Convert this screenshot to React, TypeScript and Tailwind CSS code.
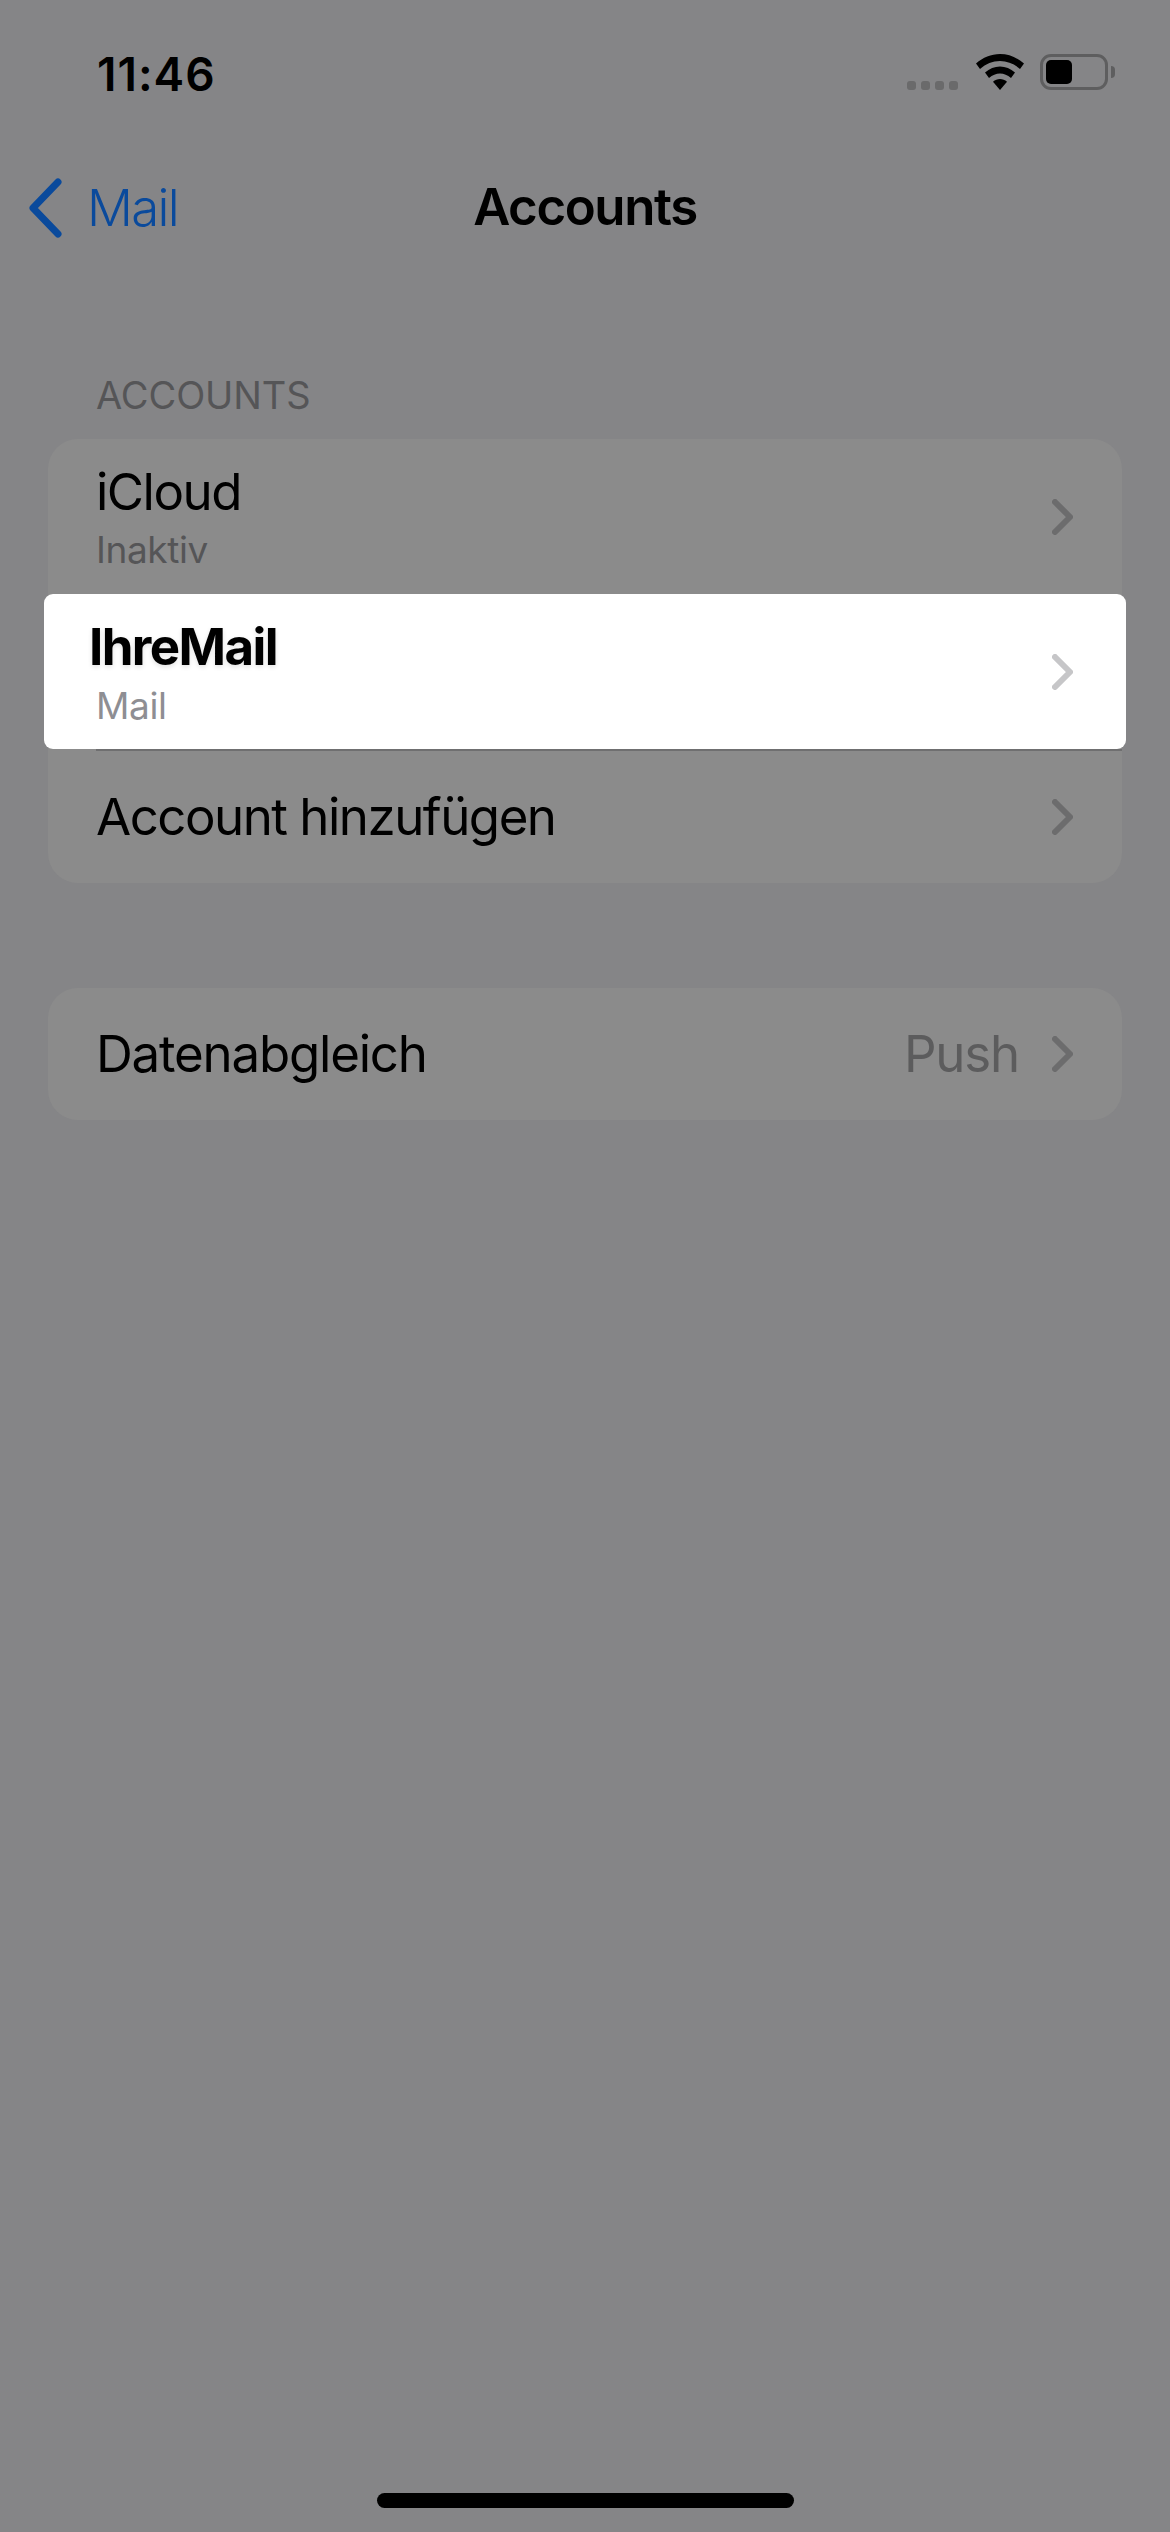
import React from "react";

function Chevron({ color }: { color: string }) {
  return (
    <svg width="21" height="36" viewBox="0 0 21 36" fill="none" className="shrink-0">
      <path d="M3 3 L18 18 L3 33" stroke={color} strokeWidth="6" strokeLinecap="round" strokeLinejoin="round" />
    </svg>
  );
}

function StatusBar() {
  return (
    <div className="flex h-[150px] items-start justify-between pl-[97px] pr-[55px] pt-[47px]">
      <span className="text-[46px] leading-[54px] font-semibold tracking-[1px] text-black">11:46</span>
      <div className="flex items-start pt-[7px]">
        <div className="mt-[27px] flex gap-[5px]">
          <span className="h-[9px] w-[9px] rounded-[3px] bg-[#6a6a6b]" />
          <span className="h-[9px] w-[9px] rounded-[3px] bg-[#6a6a6b]" />
          <span className="h-[9px] w-[9px] rounded-[3px] bg-[#6a6a6b]" />
          <span className="h-[9px] w-[9px] rounded-[3px] bg-[#6a6a6b]" />
        </div>
        <svg width="48" height="36" viewBox="0 0 48 36" className="ml-[18px] mr-[-1px]" fill="#000">
          <path d="M24 0C15 0 7 3.500 0 9.500L4 15C10 9.800 16.500 7 24 7C31.500 7 38 9.800 44 15L48 9.500C41 3.500 33 0 24 0Z" />
          <path d="M24 12.500C18.500 12.500 13.500 14.500 9 18.500L13 24C16.500 21 20 19.500 24 19.500C28 19.500 31.500 21 35 24L39 18.500C34.500 14.500 29.500 12.500 24 12.500Z" />
          <path d="M24 25C21.500 25 19 26 17 27.800L24 36L31 27.800C29 26 26.500 25 24 25Z" />
        </svg>
        <div className="ml-[17px] flex h-[36px] w-[68px] items-center rounded-[11px] border-[3px] border-[#5e5e5f] p-[3px]">
          <span className="h-[24px] w-[26px] rounded-[5px] bg-black" />
        </div>
        <span className="ml-[3px] mt-[12px] h-[12px] w-[4px] rounded-r-[4px] bg-[#5e5e5f]" />
      </div>
    </div>
  );
}

function NavBar() {
  return (
    <div className="relative flex h-[114px] items-center justify-center">
      <div className="absolute left-[26px] top-[28px] flex items-center">
        <svg width="38" height="60" viewBox="0 0 38 60" fill="none">
          <path d="M32 4 L7 30 L32 56" stroke="#0a4a9c" strokeWidth="7" strokeLinecap="round" strokeLinejoin="round" />
        </svg>
        <span className="ml-[23px] text-[51px] leading-[60px] font-light tracking-[-1.7px] text-[#0a4a9c]">Mail</span>
      </div>
      <span className="text-[51px] leading-[60px] font-semibold tracking-[-1.4px] text-black">Accounts</span>
    </div>
  );
}

function Row({
  title,
  subtitle,
  value,
  height,
  titleTracking = "tracking-[-1.5px]",
}: {
  title: string;
  subtitle?: string;
  value?: string;
  height: string;
  titleTracking?: string;
}) {
  return (
    <div className={`flex items-center justify-between pl-[48px] pr-[49px] ${height}`}>
      <div className="flex flex-col">
        <span className={`text-[51px] leading-[60px] text-black ${titleTracking}`}>{title}</span>
        {subtitle && <span className="mt-[6px] text-[37px] leading-[44px] tracking-[-0.4px] text-[#555557]">{subtitle}</span>}
      </div>
      <div className="flex items-center gap-[33px]">
        {value && <span className="text-[51px] leading-[60px] tracking-[-1.2px] text-[#5c5c5d]">{value}</span>}
        <Chevron color="#6c6c6d" />
      </div>
    </div>
  );
}

export default function App() {
  return (
    <div className="flex h-[2532px] w-[1170px] flex-col overflow-hidden bg-[#858587] font-['Inter','Liberation_Sans',sans-serif]">
      <StatusBar />
      <NavBar />
      <div className="px-[48px] pt-[108px]">
        <div className="pl-[48px] text-[38px] leading-[46px] tracking-[-0.1px] text-[#555557]">ACCOUNTS</div>
        <div className="mt-[21px] rounded-[30px] bg-[#8b8b8b]">
          <Row title="iCloud" subtitle="Inaktiv" height="h-[155px]" />
          <div className="relative z-10 -mx-[4px] flex h-[155px] items-center justify-between rounded-[9px] bg-white pl-[48px] pr-[53px]">
            <div className="flex flex-col pt-[2px]">
              <span className="-ml-[3px] text-[51px] leading-[60px] font-bold tracking-[-1.6px] text-black [text-shadow:0_2px_5px_rgba(0,0,0,0.12)]">IhreMail</span>
              <span className="ml-[4px] mt-[7px] text-[37px] leading-[44px] tracking-[-0.4px] text-[#8e8e93]">Mail</span>
            </div>
            <Chevron color="#c6c6c8" />
          </div>
          <div className="ml-[48px] h-[2px] bg-[#6f6f70]" />
          <Row title="Account hinzufügen" height="h-[132px]" />
        </div>
        <div className="mt-[105px] rounded-[30px] bg-[#8b8b8b]">
          <Row title="Datenabgleich" value="Push" height="h-[132px]" titleTracking="tracking-[-1.2px]" />
        </div>
      </div>
      <div className="mb-[24px] mt-auto flex justify-center">
        <div className="h-[15px] w-[417px] rounded-full bg-black" />
      </div>
    </div>
  );
}
